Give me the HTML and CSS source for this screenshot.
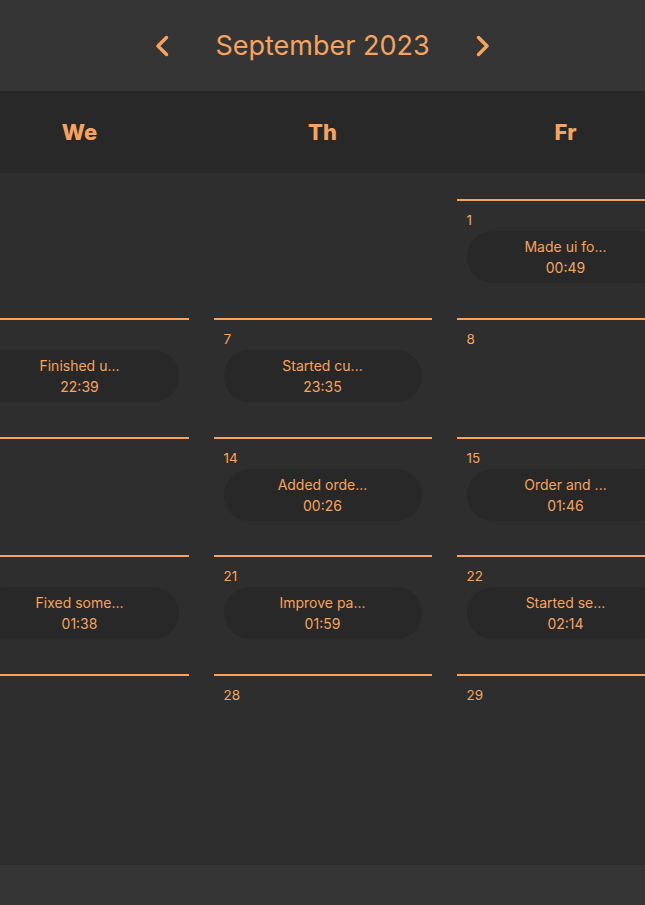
FILE: index.html
```html
<!DOCTYPE html>
<html lang="en">
<head>
<meta charset="utf-8">
<title>Calendar</title>
<link rel="stylesheet" href="styles.css">
</head>
<body>
<div class="app">
  <header class="topbar">
    <button class="nav" aria-label="Previous month">
      <svg width="14" height="22" viewBox="0 0 14 22"><path d="M11.5 2.5 L3 11 L11.5 19.5" fill="none" stroke="currentColor" stroke-width="3.5" stroke-linecap="round" stroke-linejoin="round"/></svg>
    </button>
    <h1 class="month">September 2023</h1>
    <button class="nav" aria-label="Next month">
      <svg width="14" height="22" viewBox="0 0 14 22"><path d="M2.5 2.5 L11 11 L2.5 19.5" fill="none" stroke="currentColor" stroke-width="3.5" stroke-linecap="round" stroke-linejoin="round"/></svg>
    </button>
  </header>

  <div class="weekdays">
    <div class="weekdays-grid">
      <div class="wd">Mo</div><div class="wd">Tu</div><div class="wd">We</div><div class="wd">Th</div><div class="wd">Fr</div><div class="wd">Sa</div><div class="wd">Su</div>
    </div>
  </div>

  <main class="days">
    <div class="days-grid">
      <div class="cell empty"></div><div class="cell empty"></div><div class="cell empty"></div><div class="cell empty"></div>
      <div class="cell"><div class="date">1</div><div class="event"><span>Made ui fo...</span><span>00:49</span></div></div>
      <div class="cell"><div class="date">2</div></div>
      <div class="cell"><div class="date">3</div></div>

      <div class="cell"><div class="date">4</div></div>
      <div class="cell"><div class="date">5</div></div>
      <div class="cell"><div class="date">6</div><div class="event"><span>Finished u...</span><span>22:39</span></div></div>
      <div class="cell"><div class="date">7</div><div class="event"><span>Started cu...</span><span>23:35</span></div></div>
      <div class="cell"><div class="date">8</div></div>
      <div class="cell"><div class="date">9</div></div>
      <div class="cell"><div class="date">10</div></div>

      <div class="cell"><div class="date">11</div></div>
      <div class="cell"><div class="date">12</div></div>
      <div class="cell"><div class="date">13</div></div>
      <div class="cell"><div class="date">14</div><div class="event"><span>Added orde...</span><span>00:26</span></div></div>
      <div class="cell"><div class="date">15</div><div class="event"><span>Order and ...</span><span>01:46</span></div></div>
      <div class="cell"><div class="date">16</div></div>
      <div class="cell"><div class="date">17</div></div>

      <div class="cell"><div class="date">18</div></div>
      <div class="cell"><div class="date">19</div></div>
      <div class="cell"><div class="date">20</div><div class="event"><span>Fixed some...</span><span>01:38</span></div></div>
      <div class="cell"><div class="date">21</div><div class="event"><span>Improve pa...</span><span>01:59</span></div></div>
      <div class="cell"><div class="date">22</div><div class="event"><span>Started se...</span><span>02:14</span></div></div>
      <div class="cell"><div class="date">23</div></div>
      <div class="cell"><div class="date">24</div></div>

      <div class="cell"><div class="date">25</div></div>
      <div class="cell"><div class="date">26</div></div>
      <div class="cell"><div class="date">27</div></div>
      <div class="cell"><div class="date">28</div></div>
      <div class="cell"><div class="date">29</div></div>
      <div class="cell"><div class="date">30</div></div>
      <div class="cell empty"></div>
    </div>
  </main>

  <footer class="bottom"></footer>
</div>
</body>
</html>
```

FILE: styles.css
```css
* { box-sizing: border-box; }

html, body {
  margin: 0;
  padding: 0;
  background: #2e2e2e;
  overflow: hidden;
}

body {
  font-family: Inter, "Noto Sans", sans-serif;
  color: #f4a460;
}

.app {
  display: flex;
  flex-direction: column;
  width: 645px;
  min-height: 905px;
}

.topbar {
  height: 91px;
  background: #353535;
  display: flex;
  align-items: center;
  justify-content: center;
  gap: 46px;
}

.nav {
  background: none;
  border: 0;
  padding: 0;
  color: #f4a460;
  display: flex;
  width: 14px;
  height: 22px;
  cursor: pointer;
}

.month {
  margin: 0;
  font-size: 27px;
  font-weight: 400;
  line-height: 32px;
}

.weekdays {
  height: 82px;
  background: #282828;
  display: flex;
  overflow: hidden;
}

.weekdays-grid,
.days-grid {
  display: grid;
  grid-template-columns: repeat(7, 218px);
  column-gap: 25px;
  justify-content: center;
  width: 100%;
}

.wd {
  display: flex;
  align-items: center;
  justify-content: center;
  font-size: 22px;
  font-weight: 800;
}

.days {
  background: #2e2e2e;
  padding: 26px 0 97px;
  overflow: hidden;
  display: flex;
}

.days-grid {
  grid-auto-rows: 94px;
  row-gap: 24.75px;
}

.cell {
  border-top: 2px solid #f4a460;
  padding: 9px 10px 10px;
}

.cell.empty {
  border-top: 0;
}

.date {
  font-size: 13.5px;
  line-height: 20px;
}

.event {
  margin-top: 1px;
  height: 52px;
  border-radius: 26px;
  background: #282828;
  display: flex;
  flex-direction: column;
  align-items: center;
  justify-content: center;
  font-size: 14px;
  line-height: 21px;
}

.bottom {
  flex: 1;
  background: #353535;
}
```
